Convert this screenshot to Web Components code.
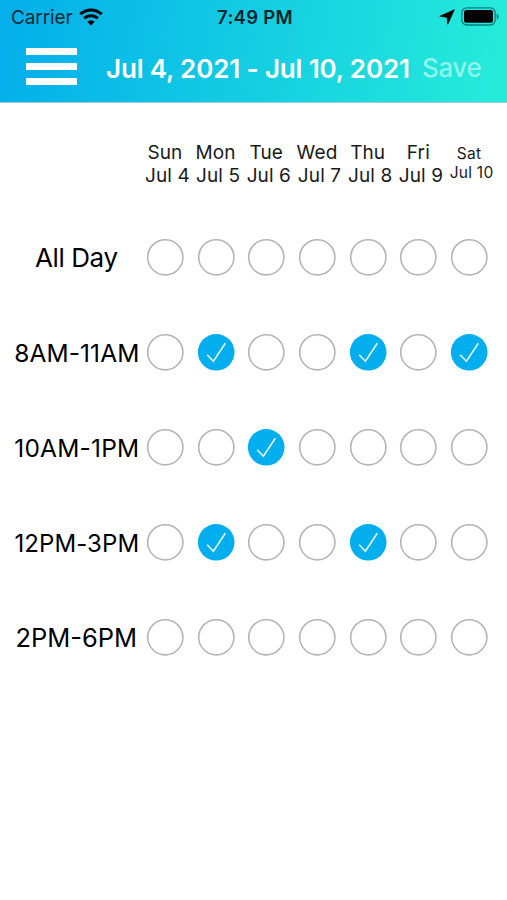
<!DOCTYPE html>
<html lang="en">
<head>
<meta charset="utf-8">
<title>Availability</title>
<style>
html,body{margin:0;height:100%;background:#fff;overflow:hidden}
body{font-family:Inter,"Liberation Sans",sans-serif;color:#000}
</style>
</head>
<body>
<availability-screen></availability-screen>
<script>
const define = (name, render) => customElements.define(name, class extends HTMLElement {
  connectedCallback() {
    if (this.shadowRoot) return;
    this.attachShadow({ mode: 'open' }).innerHTML = render(this);
  }
});

define('status-bar', () => `
<style>
:host{display:grid;grid-template-columns:1fr auto 1fr;align-items:center;height:34px;padding:0 8px 0 11px;box-sizing:border-box;font-size:19px;line-height:32px}
.left,.right{display:flex;align-items:center}
.left{color:#062a36;gap:6px;letter-spacing:-.1px}
.left span{padding-top:2px}
.left svg,.right{margin-top:-1px}
.right{justify-content:flex-end;gap:6px}
.time{font-weight:600;font-size:18.5px;letter-spacing:.3px;color:#02262b}
svg{display:block}
</style>
<div class="left"><span>Carrier</span>
<svg width="24" height="18" viewBox="0 0 24 18"><g fill="none" stroke="#000" stroke-width="3"><path d="M1.3 6.2a15.4 15.4 0 0 1 21.4 0"/><path d="M5.2 10.4a9.8 9.8 0 0 1 13.6 0"/></g><path d="M8.3 13.7a5.3 5.3 0 0 1 7.4 0L12 17.4z"/></svg></div>
<span class="time">7:49 PM</span>
<div class="right">
<svg width="16" height="16" viewBox="0 0 16 16"><path d="M15.3.8 8.7 15.2 8.1 8.2.8 7.3z" stroke="#000" stroke-width=".8" stroke-linejoin="round"/></svg>
<svg width="38" height="19" viewBox="0 0 38 19"><rect x=".8" y=".8" width="33.4" height="17.2" rx="5" fill="none" stroke="#087f7c" stroke-width="1.3"/><rect x="3" y="3" width="29" height="12.8" rx="2.5"/><path d="M35.7 6.5v6q2-.8 2-3t-2-3z" fill="#087f7c"/></svg></div>`);

define('nav-bar', () => `
<style>
:host{display:flex;height:68px;align-items:center;color:#fff;font-size:26px;white-space:nowrap}
.menu{display:flex;flex-direction:column;gap:8px;width:51px;margin:-3px 29px 0 26px}
.menu i{height:7px;background:#fff}
.title{font-weight:600;width:316px;letter-spacing:-.14px}
.save{color:#8ff5ea;font-weight:500;letter-spacing:-.4px;margin-top:-1px}
</style>
<div class="menu"><i></i><i></i><i></i></div>
<span class="title">Jul 4, 2021 - Jul 10, 2021</span>
<span class="save">Save</span>`);

define('day-heading', el => `
<style>
:host{display:flex;flex-direction:column;align-items:center;white-space:nowrap;font-size:19px;line-height:23px;color:#1a1a1a;letter-spacing:.1px}
:host([compact]){font-size:15.5px;line-height:19px;padding-top:3px;letter-spacing:.25px}
.date{margin-left:5px}
</style>
<span>${el.getAttribute('day')}</span><span class="date">${el.getAttribute('date')}</span>`);

define('slot-toggle', el => `
<style>
:host{display:flex;justify-content:center}
svg{display:block}
</style>
<svg width="38" height="38" viewBox="0 0 38 38">${el.hasAttribute('checked')
 ? '<circle cx="19.2" cy="19.3" r="18.3" fill="#03aeef"/><path d="M10.1 21.8 16.4 28.3 28.3 10.3" fill="none" stroke="#e4f7ff" stroke-width="1.6"/>'
 : '<circle cx="19.3" cy="19.3" r="17.6" fill="#fff" stroke="#b5b5b5" stroke-width="1.6"/>'}</svg>`);

define('time-row', el => {
  const on = (el.getAttribute('on') || '').split(' ');
  return `
<style>
:host{display:grid;grid-template-columns:139.6px repeat(7,50.7px);align-items:center;height:95px}
.label{padding-left:13px;padding-top:1px;display:flex;justify-content:center;white-space:nowrap}
:host([on]) .label{padding-top:3px;padding-left:14px}
</style>
<div class="label"><slot></slot></div>
${[0,1,2,3,4,5,6].map(i => `<slot-toggle${on.includes(String(i)) ? ' checked' : ''}></slot-toggle>`).join('')}`;
});

define('availability-screen', () => `
<style>
:host{display:block;height:900px}
header{height:102px;background:linear-gradient(98deg,#04afeb 2%,#25ebda 98%);border-bottom:1px solid #9cced9}
.days{display:grid;grid-template-columns:repeat(7,50.7px);padding:38px 0 0 139.6px;height:33px;margin-bottom:35px}
</style>
<header><status-bar></status-bar><nav-bar></nav-bar></header>
<section class="days">
<day-heading day="Sun" date="Jul 4"></day-heading><day-heading day="Mon" date="Jul 5"></day-heading><day-heading day="Tue" date="Jul 6"></day-heading><day-heading day="Wed" date="Jul 7"></day-heading><day-heading day="Thu" date="Jul 8"></day-heading><day-heading day="Fri" date="Jul 9"></day-heading><day-heading compact day="Sat" date="Jul 10"></day-heading>
</section>
<time-row style="font-size:26px;letter-spacing:-.4px">All Day</time-row>
<time-row on="1 4 6" style="font-size:24.5px;letter-spacing:.1px">8AM-11AM</time-row>
<time-row on="2" style="font-size:24.5px;letter-spacing:.2px">10AM-1PM</time-row>
<time-row on="1 4" style="font-size:24px;letter-spacing:.1px">12PM-3PM</time-row>
<time-row style="font-size:25.5px">2PM-6PM</time-row>`);
</script>
</body>
</html>
